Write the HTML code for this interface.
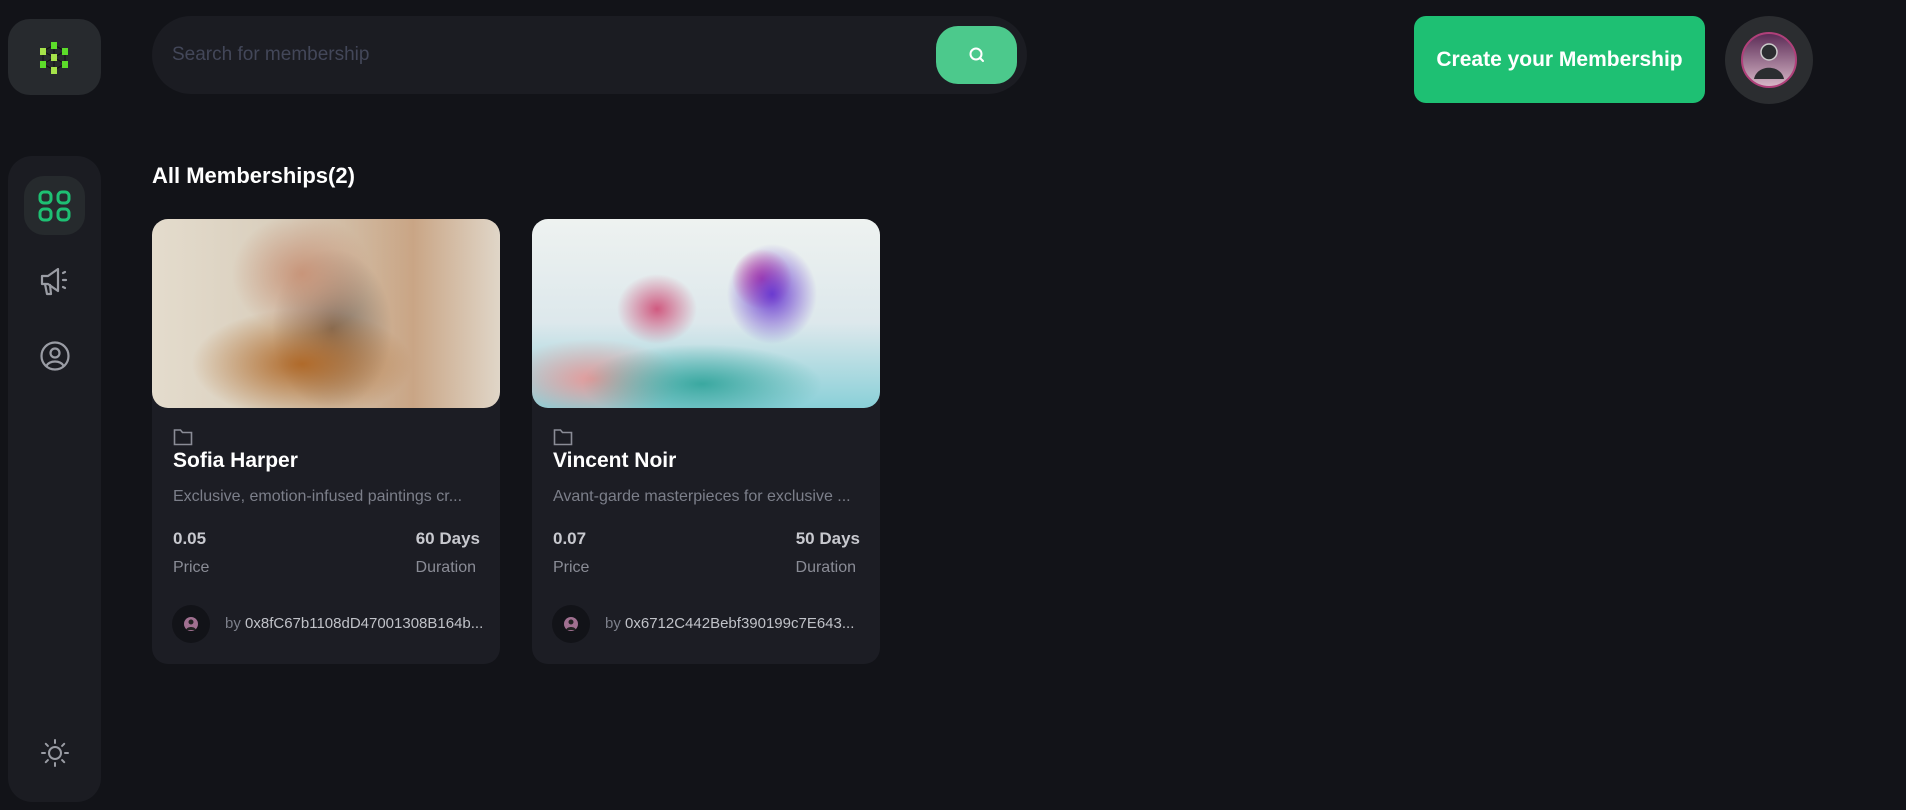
<!DOCTYPE html>
<html><head><meta charset="utf-8"><style>
*{margin:0;padding:0;box-sizing:border-box}
body{width:1906px;height:810px;background:#121318;font-family:"Liberation Sans",sans-serif;position:relative;overflow:hidden;color:#fff}
.abs{position:absolute}
.logo{left:8px;top:19px;width:93px;height:76px;background:#272a2e;border-radius:22px}
.side{left:8px;top:156px;width:93px;height:646px;background:#1b1c22;border-radius:24px}
.active{left:24px;top:176px;width:61px;height:59px;background:#262a2d;border-radius:20px}
.search{left:152px;top:16px;width:875px;height:78px;background:#1b1c22;border-radius:39px}
.search span{position:absolute;left:20px;top:28px;font-size:19px;color:#434759}
.sbtn{left:936px;top:26px;width:81px;height:58px;background:#4cc98c;border-radius:22px}
.create{left:1414px;top:16px;width:291px;height:87px;background:#1ec073;border-radius:12px;font-weight:bold;font-size:21px;line-height:87px;text-align:center}
.av{left:1725px;top:16px;width:88px;height:88px;border-radius:50%;background:#2b2d30}
h2{position:absolute;left:152px;top:163px;font-size:22px;font-weight:bold}
.card{top:219px;width:348px;height:445px;background:#1c1d24;border-radius:16px}
.img{position:absolute;left:0;top:0;width:348px;height:189px;border-radius:16px;overflow:hidden}
.name{position:absolute;left:21px;top:230px;font-size:21px;font-weight:bold}
.desc{position:absolute;left:21px;top:269px;font-size:16px;color:#7c7f8a;white-space:nowrap}
.val{position:absolute;top:310px;font-size:17px;font-weight:bold;color:#c8c9cf}
.lab{position:absolute;top:340px;font-size:16px;color:#8a8c96}
.uav{position:absolute;left:20px;top:386px;width:38px;height:38px;border-radius:50%;background:#121318}
.by{position:absolute;left:73px;top:396px;font-size:15px;color:#c0c2c8;white-space:nowrap}
.by b{font-weight:normal;color:#7c7f8a}
</style></head><body>
<div class="abs logo"><svg width="93" height="76" viewBox="0 0 93 76"><g stroke="#111" stroke-width="1" fill="none"><path d="M46 26 L57 32 L57 45 L46 51 L35 45 L35 32 Z M46 26 L46 51 M35 32 L57 45 M57 32 L35 45"/></g><g fill="#5cdc2a"><rect x="43" y="23" width="6" height="7"/><rect x="54" y="29" width="6" height="7"/><rect x="54" y="42" width="6" height="7"/><rect x="43" y="48" width="6" height="7" fill="#a6e34a"/><rect x="32" y="42" width="6" height="7"/><rect x="32" y="29" width="6" height="7" fill="#a6e34a"/><rect x="43" y="35" width="6" height="7" fill="#a6e34a"/></g></svg></div>
<div class="abs side"></div>
<div class="abs active"><svg width="61" height="59" viewBox="0 0 61 59"><g fill="none" stroke="#1ec073" stroke-width="3"><rect x="16" y="16" width="11" height="11" rx="4"/><rect x="34" y="16" width="11" height="11" rx="4"/><rect x="16" y="33" width="11" height="11" rx="4"/><rect x="34" y="33" width="11" height="11" rx="4"/></g></svg></div>
<svg class="abs" style="left:38px;top:264px" width="34" height="34" viewBox="0 0 34 34"><g fill="none" stroke="#9a9ca4" stroke-width="2.2" stroke-linecap="round" stroke-linejoin="round"><path d="M4 12 L4 20 L10 20 L20 27 L20 5 L10 12 Z"/><path d="M7 20 L9 30 L13 30 L12 21"/><path d="M25 9 L27 8 M25 16 L28 16 M25 23 L27 24"/></g></svg>
<svg class="abs" style="left:39px;top:340px" width="32" height="32" viewBox="0 0 32 32"><g fill="none" stroke="#9a9ca4" stroke-width="2.2"><circle cx="16" cy="16" r="13.5"/><circle cx="16" cy="13" r="4.5"/><path d="M7.5 26 C10 20 22 20 24.5 26"/></g></svg>
<svg class="abs" style="left:39px;top:737px" width="32" height="32" viewBox="0 0 32 32"><g fill="none" stroke="#9a9ca4" stroke-width="2" stroke-linecap="round"><circle cx="16" cy="16" r="6"/><path d="M16 3v3M16 26v3M3 16h3M26 16h3M6.8 6.8l2.1 2.1M23.1 23.1l2.1 2.1M6.8 25.2l2.1-2.1M23.1 8.9l2.1-2.1"/></g></svg>
<div class="abs search"><span>Search for membership</span></div>
<div class="abs sbtn"><svg width="81" height="58" viewBox="0 0 81 58"><g fill="none" stroke="#fff" stroke-width="2"><circle cx="40" cy="28" r="5.5"/><path d="M44 32 L47 35" stroke-linecap="round"/></g></svg></div>
<div class="abs create">Create your Membership</div>
<div class="abs av"><svg width="88" height="88" viewBox="0 0 88 88"><defs><linearGradient id="ag" x1="0" y1="0" x2="0" y2="1"><stop offset="0" stop-color="#5a2a55"/><stop offset="1" stop-color="#d8b8c8"/></linearGradient></defs><circle cx="44" cy="44" r="27" fill="url(#ag)" stroke="#b0407a" stroke-width="2"/><circle cx="44" cy="36" r="8" fill="#2b2d30" stroke="#ccc" stroke-width="1.5"/><path d="M29 63 C32 48 56 48 59 63 Z" fill="#2b2d30"/></svg></div>
<h2>All Memberships(2)</h2>

<div class="abs card" style="left:152px">
 <div class="img" style="background:radial-gradient(ellipse 70px 60px at 150px 55px,#c8957a,transparent),radial-gradient(ellipse 110px 55px at 150px 145px,#b06a2a,transparent),radial-gradient(ellipse 60px 80px at 180px 110px,#7a6a5c,transparent),linear-gradient(90deg,#e4dccd,#d8cdbb 40%,#c9a585 75%,#e0d6c8)"></div>
 <svg class="abs" style="left:21px;top:209px" width="20" height="18" viewBox="0 0 20 18"><path d="M1.5 2h6l2 2.5h9v12h-17z" fill="none" stroke="#8a8c96" stroke-width="1.6"/></svg>
 <div class="name">Sofia Harper</div>
 <div class="desc">Exclusive, emotion-infused paintings cr...</div>
 <div class="val" style="left:21px">0.05</div><div class="val" style="right:20px">60 Days</div>
 <div class="lab" style="left:21px">Price</div><div class="lab" style="right:24px">Duration</div>
 <div class="uav"><svg width="38" height="38"><circle cx="19" cy="19" r="7" fill="#a07090"/><circle cx="19" cy="17" r="2.5" fill="#222"/><path d="M14 25c1-4 9-4 10 0z" fill="#222"/></svg></div>
 <div class="by"><b>by</b> 0x8fC67b1108dD47001308B164b...</div>
</div>

<div class="abs card" style="left:532px">
 <div class="img" style="background:radial-gradient(ellipse 40px 35px at 125px 90px,#d05a80,transparent),radial-gradient(ellipse 45px 50px at 240px 75px,#6a3ad0,transparent),radial-gradient(ellipse 30px 30px at 230px 60px,#e0408a,transparent),radial-gradient(ellipse 120px 40px at 170px 165px,#3aa8a0,transparent),radial-gradient(ellipse 90px 40px at 60px 160px,#e49a9a,transparent),linear-gradient(180deg,#eef2f0,#dde8ec 55%,#8ad0d8)"></div>
 <svg class="abs" style="left:21px;top:209px" width="20" height="18" viewBox="0 0 20 18"><path d="M1.5 2h6l2 2.5h9v12h-17z" fill="none" stroke="#8a8c96" stroke-width="1.6"/></svg>
 <div class="name">Vincent Noir</div>
 <div class="desc">Avant-garde masterpieces for exclusive ...</div>
 <div class="val" style="left:21px">0.07</div><div class="val" style="right:20px">50 Days</div>
 <div class="lab" style="left:21px">Price</div><div class="lab" style="right:24px">Duration</div>
 <div class="uav"><svg width="38" height="38"><circle cx="19" cy="19" r="7" fill="#a07090"/><circle cx="19" cy="17" r="2.5" fill="#222"/><path d="M14 25c1-4 9-4 10 0z" fill="#222"/></svg></div>
 <div class="by"><b>by</b> 0x6712C442Bebf390199c7E643...</div>
</div>
</body></html>
